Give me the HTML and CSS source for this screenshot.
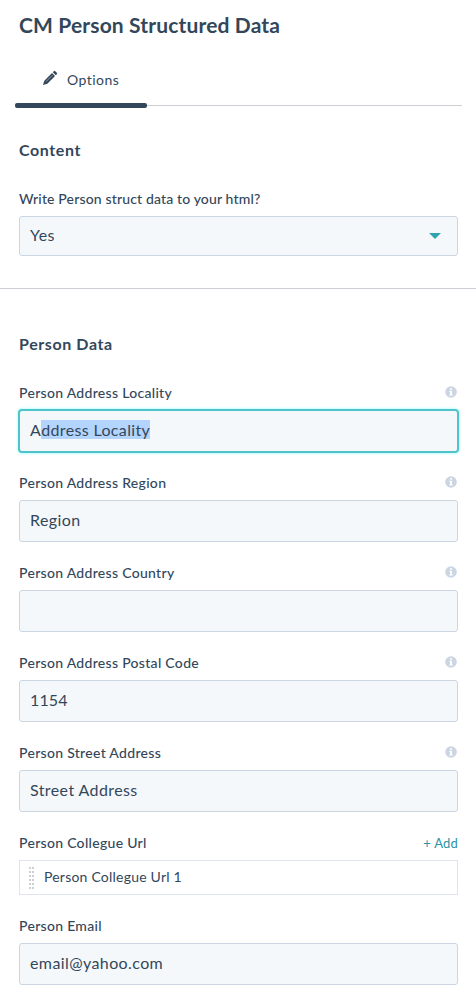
FILE: index.html
```html
<!DOCTYPE html>
<html lang="en">
<head>
  <meta charset="UTF-8" />
  <meta name="viewport" content="width=device-width, initial-scale=1.0">
  <title>CM Person Structured Data</title>
  <link rel="stylesheet" href="styles.css">
</head>
<body>
  <svg class="defs" width="0" height="0">
    <symbol id="info" viewBox="0 0 12 12">
      <circle cx="6" cy="6" r="5.8" fill="#cbd6e2"/>
      <path d="M5 2.2h2v1.6H5zM4.4 4.8H7v3.6h.7v1.2H4.4V8.400h.7V6h-.7z" fill="#fff"/>
    </symbol>
  </svg>

  <h1>CM Person Structured Data</h1>
  <div class="tabs">
    <a class="tab active">
      <span class="tab-label">
        <svg class="pencil" width="16" height="16" viewBox="0 0 16 16">
          <path d="M1 15l1.300-4.300 7.700-7.700 3 3-7.700 7.700zM10.800 2.200l1-1q.7-.7 1.400 0l1.600 1.600q.7.7 0 1.400l-1 1z" fill="#33475b"/>
          <path d="M4 11.600l6.500-6.500" stroke="#b4bec8" stroke-width=".7"/>
        </svg>
        <span>Options</span>
      </span>
      <span class="bar"></span>
    </a>
  </div>

  <section class="content">
    <h2>Content</h2>
    <div class="label question"><label>Write Person struct data to your html?</label></div>
    <div class="select">
      <span>Yes</span>
      <svg width="12" height="6" viewBox="0 0 12 6"><path d="M0 0h12L6 6z" fill="#2fa4ae"/></svg>
    </div>
  </section>

  <section class="person">
    <h2>Person Data</h2>
    <div class="field">
      <div class="label"><label>Person Address Locality</label><svg class="info"><use href="#info"/></svg></div>
      <div class="input focused">A<span class="selected">ddress Locality</span></div>
    </div>
    <div class="field">
      <div class="label"><label for="region">Person Address Region</label><svg class="info"><use href="#info"/></svg></div>
      <input class="input" id="region" type="text" value="Region">
    </div>
    <div class="field">
      <div class="label"><label for="country">Person Address Country</label><svg class="info"><use href="#info"/></svg></div>
      <input class="input" id="country" type="text" value="">
    </div>
    <div class="field">
      <div class="label"><label for="postal">Person Address Postal Code</label><svg class="info"><use href="#info"/></svg></div>
      <input class="input number" id="postal" type="text" value="1154">
    </div>
    <div class="field">
      <div class="label"><label for="street">Person Street Address</label><svg class="info"><use href="#info"/></svg></div>
      <input class="input" id="street" type="text" value="Street Address">
    </div>
    <div class="field">
      <div class="label"><label>Person Collegue Url</label><a class="add">+ Add</a></div>
      <div class="item"><span class="grip"></span><span>Person Collegue Url 1</span></div>
    </div>
    <div class="field">
      <div class="label"><label for="email">Person Email</label></div>
      <input class="input" id="email" type="text" value="email@yahoo.com">
    </div>
  </section>
</body>
</html>
```

FILE: styles.css
```css
* {
  box-sizing: border-box;
}
html, body {
  margin: 0;
  padding: 0;
}
body {
  background: #fff;
  color: #33475b;
  font-family: Lato, "Open Sans", sans-serif;
  height: 998px;
  overflow: hidden;
}
.defs {
  display: block;
}
h1 {
  font-size: 21px;
  line-height: 28px;
  font-weight: 700;
  margin: 0;
  padding: 11px 19px 0;
  letter-spacing: 0.15px;
}
h2 {
  font-size: 16px;
  line-height: 20px;
  font-weight: 700;
  letter-spacing: 0.6px;
  margin: 0;
}
.tabs {
  display: flex;
  height: 69px;
  margin: 0 14px 0 15px;
  align-items: flex-end;
  background: linear-gradient(#cccfd3, #cccfd3) 0 66px / 100% 1px no-repeat;
}
.tab {
  display: flex;
  flex-direction: column;
  width: 132px;
  font-size: 14px;
  letter-spacing: 0.45px;
}
.tab-label {
  display: flex;
  align-items: center;
  gap: 9px;
  height: 47px;
  padding: 0 0 0 27px;
}
.bar {
  height: 5px;
  border-radius: 2px;
  background: #33475b;
}
.pencil {
  margin-top: -3px;
}
.content {
  height: 181px;
  padding: 32px 18px 0 19px;
  border-bottom: 1px solid #cccfd3;
}
.person {
  padding: 45px 18px 0 19px;
}
.label {
  display: flex;
  align-items: center;
  justify-content: space-between;
  height: 18px;
  margin-bottom: 9px;
  font-size: 14px;
  font-weight: 500;
  letter-spacing: 0.3px;
}
.question {
  letter-spacing: 0.15px;
}
h2 + .label, h2 + .field {
  margin-top: 29px;
}
.info {
  width: 12px;
  height: 12px;
  margin-right: 1px;
}
.select, .input {
  display: flex;
  align-items: center;
  width: 100%;
  height: 42px;
  padding: 0 10px 3px;
  background: #f5f8fa;
  border: 1px solid #cbd6e2;
  border-radius: 3px;
  color: #33475b;
  font-family: inherit;
  font-size: 16px;
  letter-spacing: 0.4px;
}
.select {
  height: 40px;
  padding-right: 16px;
  justify-content: space-between;
}
.select svg {
  margin-top: 3px;
}
.input.number {
  letter-spacing: 0.1px;
}
.input.focused {
  border-color: #4fc3c9;
  box-shadow: 0 0 0 1px #4fc3c9, 0 0 3px 1px #7fffff;
  letter-spacing: 0.35px;
}
.selected {
  background: #b3d4fc;
  line-height: 19px;
}
.field {
  margin-bottom: 21px;
}
.add {
  color: #2a93a5;
  font-size: 13px;
  font-weight: 400;
  letter-spacing: 0.2px;
  margin-top: 1px;
}
.item {
  display: flex;
  align-items: center;
  height: 35px;
  padding: 0 0 2px 9px;
  gap: 10px;
  border: 1px solid #dfe3eb;
  font-size: 14px;
  letter-spacing: 0.22px;
}
.grip {
  width: 5px;
  height: 22px;
  margin-top: 2px;
  background: repeating-linear-gradient(#fff0 0 2px, #fff 2px 4px), linear-gradient(90deg, #cbd0d6 2px, #fff 2px 3px, #cbd0d6 3px);
}
```
